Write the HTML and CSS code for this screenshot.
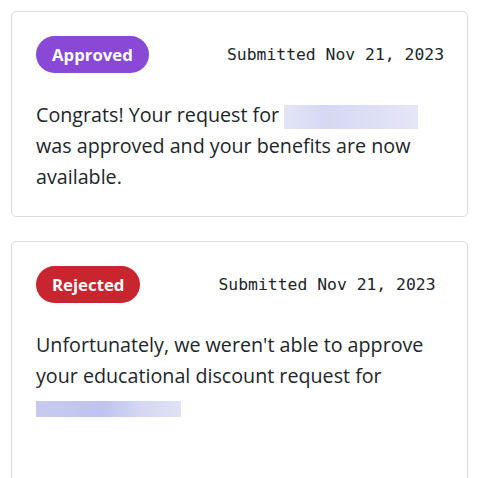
FILE: index.html
```html
<!DOCTYPE html>
<html>
<head>
<meta charset="utf-8">
<link rel="stylesheet" href="styles.css">
</head>
<body>
<div class="list">
  <div class="card">
    <div class="head">
      <span class="badge approved">Approved</span>
      <span class="date">Submitted Nov 21, 2023</span>
    </div>
    <p class="msg">Congrats! Your request for <span class="blur blur-a"></span> was approved and your benefits are now available.</p>
  </div>
  <div class="card">
    <div class="head">
      <span class="badge rejected">Rejected</span>
      <span class="date">Submitted Nov 21, 2023</span>
    </div>
    <p class="msg">Unfortunately, we weren't able to approve your educational discount request for <span class="blur blur-b"></span></p>
    <div class="spacer"></div>
  </div>
</div>
</body>
</html>
```

FILE: styles.css
```css
* { box-sizing: border-box; }
html, body { margin: 0; padding: 0; background: #fff; }
body { font-family: "Open Sans", "Noto Sans", sans-serif; color: #212529; }
.list {
  display: flex;
  flex-direction: column;
  gap: 24px;
  padding: 11px;
  width: 479px;
}
.card {
  border: 1px solid #dcdcdc;
  border-radius: 5px;
  padding: 24px;
}
.head {
  display: flex;
  align-items: center;
  gap: 78px;
}
.badge {
  display: inline-block;
  color: #fff;
  font-weight: 700;
  font-size: 16.8px;
  line-height: 25px;
  padding: 6px 16px;
  border-radius: 19px;
  white-space: nowrap;
}
.approved { background: #8a48d6; }
.rejected { background: #c8252f; }
.date {
  font-family: "DejaVu Sans Mono", "Liberation Mono", monospace;
  font-size: 16.4px;
  color: #212529;
  white-space: nowrap;
}
.msg {
  margin: 26px 0 0;
  font-size: 19.7px;
  line-height: 31px;
}
.blur {
  display: inline-block;
  vertical-align: middle;
  height: 24px;
  background: linear-gradient(90deg, #e3e5f6 0%, #d6d8f3 30%, #dcdef5 60%, #e5e6f7 100%);
}
.blur-a { width: 134px; }
.blur-b { width: 145px; height: 16px; background: linear-gradient(90deg, #c8cbef 0%, #bfc3ee 45%, #d3d5f3 70%, #e0e2f6 100%); }
.spacer { height: 60px; }
```
